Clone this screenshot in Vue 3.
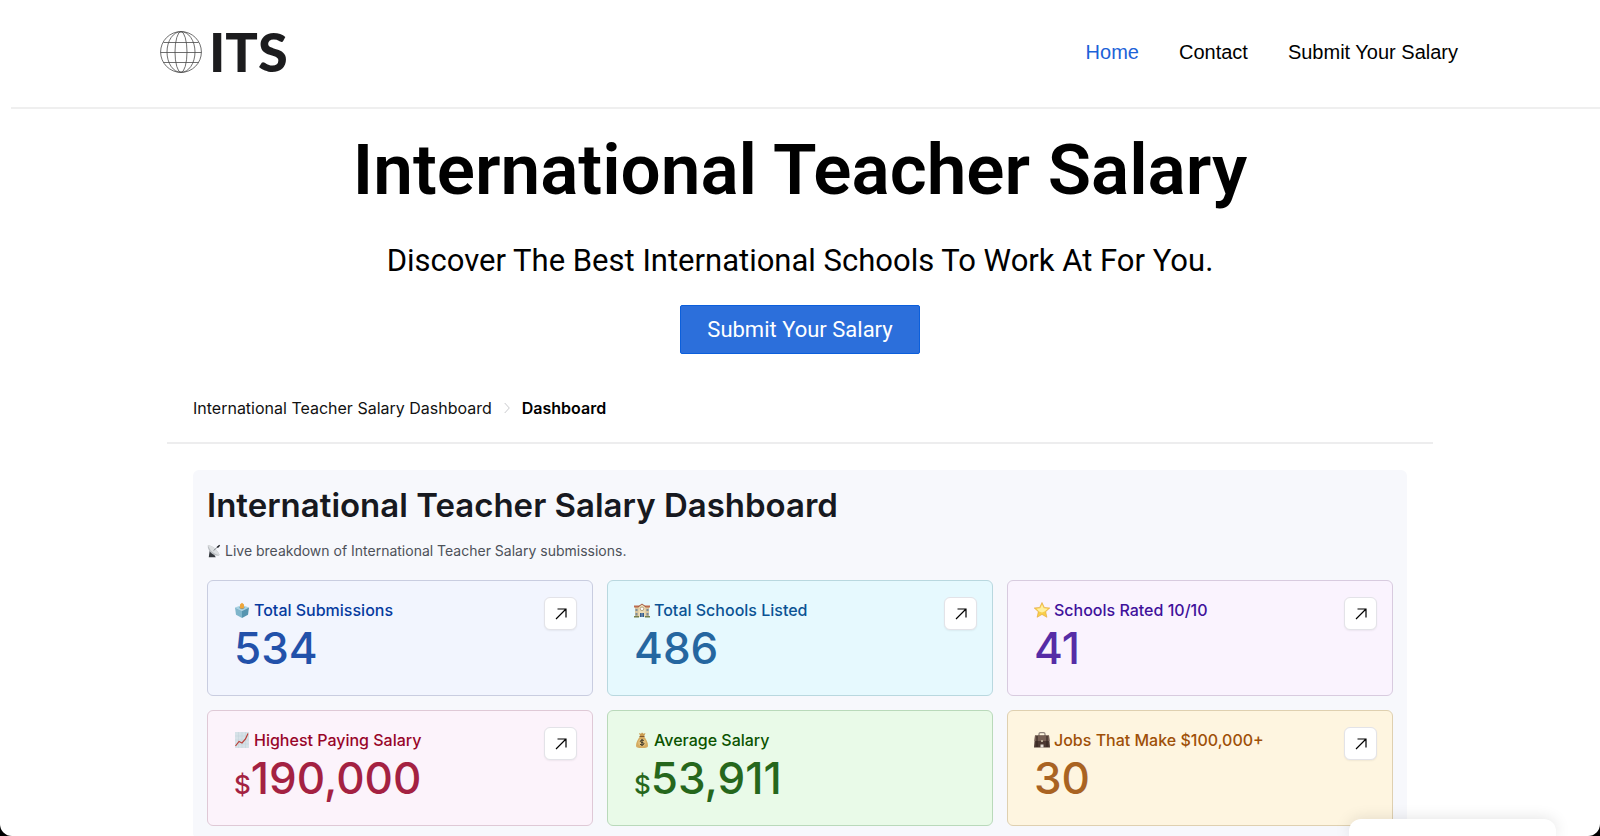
<script setup>
  const navLinks = [
    { label: 'Home', href: '#home', active: true },
    { label: 'Contact', href: '#contact' },
    { label: 'Submit Your Salary', href: '#submit' },
  ]

  const stats = [
    { id: 'submissions', icon: 'ballot', label: 'Total Submissions', value: '534', link: true },
    { id: 'schools', icon: 'school', label: 'Total Schools Listed', value: '486', link: true },
    { id: 'rated', icon: 'star', label: 'Schools Rated 10/10', value: '41', link: true },
    { id: 'highest', icon: 'chart', label: 'Highest Paying Salary', prefix: '$', value: '190,000', link: true },
    { id: 'average', icon: 'money', label: 'Average Salary', prefix: '$', value: '53,911' },
    { id: 'jobs', icon: 'briefcase', label: 'Jobs That Make $100,000+', value: '30', link: true },
  ]
</script>

<template>
  <div class="page">
    <header class="site-header">
      <a class="logo" href="#home">
        <svg class="logo-globe" viewBox="0 0 42 42" aria-hidden="true">
          <circle cx="21" cy="21" r="20.4" />
          <ellipse cx="21" cy="21" rx="14" ry="20.4" />
          <ellipse cx="21" cy="21" rx="6" ry="20.4" />
          <path d="M0.6 21.5H41.4M3.5 11.5H38.5M3.5 31.5H38.5" />
        </svg>
        <span class="logo-text">ITS</span>
      </a>
      <nav class="nav">
        <a
          v-for="item in navLinks"
          :key="item.label"
          :href="item.href"
          :class="['nav-link', { active: item.active }]"
          >{{ item.label }}</a
        >
      </nav>
    </header>

    <section class="hero">
      <h1 class="hero-title">International Teacher Salary</h1>
      <p class="hero-text">Discover The Best International Schools To Work At For You.</p>
      <button type="button" class="hero-button">Submit Your Salary</button>
    </section>

    <main class="content">
      <nav class="breadcrumb" aria-label="Breadcrumb">
        <a class="breadcrumb-link" href="#dashboards">International Teacher Salary Dashboard</a>
        <svg class="breadcrumb-arrow" viewBox="0 0 6 12" aria-hidden="true">
          <path d="M0.7 1L5.3 6L0.7 11" />
        </svg>
        <span class="breadcrumb-current">Dashboard</span>
      </nav>

      <section class="dashboard">
        <h2 class="dashboard-title">International Teacher Salary Dashboard</h2>
        <p class="dashboard-text">
          <svg class="dish" viewBox="0 0 16 16" aria-hidden="true">
            <path d="M3 8L2 15H10L7 10Z" fill="#34383d" />
            <path d="M1 1C0 6 5 13 13 13.5L14.5 12.5C12 7 7 2 1 1Z" fill="#b9bdc1" />
            <path d="M1 1C3 7 8 12 14.5 12.5C12 7 7 2 1 1Z" fill="#dcdfe1" />
            <path d="M7.5 7.5L13 2.5" stroke="#777c82" stroke-width="1" />
            <path d="M11 3.5L14 0.8L15 2L12.5 4.5Z" fill="#202327" />
          </svg>
          Live breakdown of International Teacher Salary submissions.
        </p>

        <div class="stats">
          <article v-for="stat in stats" :key="stat.id" :class="['stat', `stat-${stat.id}`]">
            <div class="stat-body">
              <h3 class="stat-label">
                <svg class="stat-icon" viewBox="0 0 16 16" aria-hidden="true">
                  <g v-if="stat.icon === 'ballot'">
                    <path d="M1 5.5L8 3L15 5.5L8 9Z" fill="#a9d2e2" />
                    <path d="M1 5.5L8 9V16L2 12.8Z" fill="#7fb5cb" />
                    <path d="M15 5.5L8 9V16L14 12.8Z" fill="#5795b0" />
                    <path d="M5 5.8L8 4.7L11 5.8L8 7.2Z" fill="#4c7f98" />
                    <path d="M6 6.2V2.5L8 0.8L10 2.5V6L8 6.8Z" fill="#eda63d" />
                  </g>
                  <g v-else-if="stat.icon === 'school'">
                    <path d="M1 5H15V15H1Z" fill="#d8c49c" />
                    <path d="M0 3.5H16V5.5H0Z" fill="#bd6c4e" />
                    <path d="M4.5 5L8 2.5L11.5 5V15H4.5Z" fill="#ecdcb5" />
                    <path d="M4 5L8 2L12 5" stroke="#a85d42" fill="none" />
                    <circle cx="8" cy="6.8" r="1.8" fill="#fff" stroke="#9b8760" stroke-width="0.7" />
                    <path d="M1.5 7H3.5V9H1.5ZM12.5 7H14.5V9H12.5ZM1.5 11H3.5V13.5H1.5ZM12.5 11H14.5V13.5H12.5Z" fill="#7c8c98" />
                    <path d="M6 11H10V15H6Z" fill="#355c8b" />
                    <path d="M8 11V15" stroke="#cad6df" stroke-width="0.6" />
                    <path d="M0 14H5V15.5H0ZM11 14H16V15.5H11Z" fill="#75804d" />
                  </g>
                  <g v-else-if="stat.icon === 'star'">
                    <path
                      d="M8 0.5L10.3 5.4L15.8 6L11.7 9.7L12.9 15.3L8 12.4L3.1 15.3L4.3 9.7L0.2 6L5.7 5.4Z"
                      fill="#f8ce4b"
                      stroke="#e2a63b"
                      stroke-width="0.6"
                    />
                    <path d="M8 2.5L9.7 6.2L13.8 6.8L10.5 9.4L8 10.5L5.2 9.4L2.5 6.8L6.3 6.2Z" fill="#fff0a0" />
                  </g>
                  <g v-else-if="stat.icon === 'chart'">
                    <path d="M1 0H15V16H1Z" fill="#d6e1e7" />
                    <path d="M4.5 0V16M8 0V16M11.5 0V16M1 4H15M1 8H15M1 12H15" stroke="#c3d0d8" stroke-width="0.5" />
                    <path d="M1.5 14L5 9.5L8 11L11.5 7L14 1.5" fill="none" stroke="#ba3e37" stroke-width="1.2" />
                  </g>
                  <g v-else-if="stat.icon === 'money'">
                    <path d="M5 1L7 1.8L8 0.5L9.5 1.7L11.5 1L10 4.5H6.3Z" fill="#c99b4f" />
                    <path d="M6 4.5H10C12 7 14 10 14 13.5C14 15.5 12.5 16 8 16C3.5 16 2 15.5 2 13.5C2 10 4 7 6 4.5Z" fill="#d5ab60" />
                    <path d="M5.5 4.5H10.5" stroke="#80572d" />
                    <circle cx="8" cy="10.5" r="3.8" fill="#e2bf7b" />
                    <path
                      d="M10 8.7C9.5 7.9 6.3 7.7 6.3 9.3C6.3 10.9 10 10 10 11.8C10 13.3 6.7 13.2 6 12.2M8 6.9V14"
                      fill="none"
                      stroke="#3b3427"
                      stroke-width="1"
                    />
                  </g>
                  <g v-else>
                    <path d="M5 4V2C5 0.9 5.6 0.7 6.5 0.7H9.5C10.4 0.7 11 0.9 11 2V4" fill="none" stroke="#8d8179" stroke-width="1.2" />
                    <path d="M1 3.5H15L16 15.5H0Z" fill="#4b3831" />
                    <path d="M1 3.5H15L15.5 9H0.5Z" fill="#755e53" />
                    <path d="M3 4V15M13 4V15" stroke="#32231e" stroke-width="1" />
                    <path d="M6.5 12.5H9.5V15.5H6.5Z" fill="#e4ddd5" />
                    <path d="M7 8H9V10H7Z" fill="#b6a994" />
                  </g>
                </svg>
                {{ stat.label }}
              </h3>
              <p class="stat-value"><span v-if="stat.prefix" class="stat-prefix">{{ stat.prefix }}</span>{{ stat.value }}</p>
            </div>
            <button v-if="stat.link" type="button" class="stat-open" :aria-label="`Open ${stat.label}`">
              <svg viewBox="0 0 12 12" aria-hidden="true">
                <path d="M1 11L11 1M2.5 1H11V9.5" />
              </svg>
            </button>
          </article>
        </div>
      </section>
    </main>

    <aside class="floating-card"></aside>
  </div>
</template>

<style>
  body {
    margin: 0;
    background: #000000;
  }
</style>

<style scoped>
  .page {
    position: relative;
    box-sizing: border-box;
    height: 100vh;
    overflow: hidden;
    border-radius: 0 0 12px 12px;
    background: #ffffff;
    color: #000000;
    font-family: Inter, 'Liberation Sans', sans-serif;
  }

  .site-header {
    display: flex;
    align-items: center;
    justify-content: space-between;
    margin-left: 11px;
    padding: 20px 142px 23px 149px;
    border-bottom: 2px solid #efefef;
  }

  .logo {
    display: flex;
    align-items: center;
    gap: 7px;
    color: #1c1c1e;
    text-decoration: none;
  }

  .logo-globe {
    width: 42px;
    height: 42px;
    fill: none;
    stroke: #4a4a4a;
    stroke-width: 0.8;
  }

  .logo-text {
    font-family: Lato, sans-serif;
    font-size: 54px;
    font-weight: 900;
    line-height: 64px;
  }

  .nav {
    display: flex;
    gap: 40px;
    font-family: 'Liberation Sans', Arial, sans-serif;
    font-size: 20px;
    line-height: 24px;
  }

  .nav-link {
    color: #000000;
    text-decoration: none;
  }

  .nav-link.active {
    color: #1c62d8;
  }

  .hero {
    display: flex;
    flex-direction: column;
    align-items: center;
    padding-top: 19px;
    font-family: Roboto, sans-serif;
    text-align: center;
  }

  .hero-title {
    margin: 0;
    font-size: 71px;
    font-weight: 600;
    line-height: 84px;
  }

  .hero-text {
    margin: 29px 0 24px;
    font-size: 31px;
    line-height: 40px;
  }

  .hero-button {
    height: 49px;
    padding: 0 26px;
    border: 1px solid #0b5fdc;
    border-radius: 2px;
    background: #2c6fdb;
    color: #ffffff;
    font-family: inherit;
    font-size: 22px;
    cursor: pointer;
  }

  .content {
    margin: 26px 167px 0;
  }

  .breadcrumb {
    display: flex;
    align-items: center;
    gap: 12px;
    padding: 16px 26px 22px;
    border-bottom: 2px solid #ededee;
    font-size: 16px;
    line-height: 24px;
  }

  .breadcrumb-link {
    color: #111111;
    text-decoration: none;
  }

  .breadcrumb-arrow {
    width: 6px;
    height: 12px;
    fill: none;
    stroke: #c9cacd;
  }

  .breadcrumb-current {
    font-weight: 600;
  }

  .dashboard {
    margin: 26px 26px 0;
    padding: 13px 14px;
    border-radius: 6px;
    background: #f7f8fc;
  }

  .dashboard-title {
    margin: 0;
    color: #171920;
    font-size: 33px;
    font-weight: 600;
    line-height: 44px;
  }

  .dashboard-text {
    display: flex;
    align-items: center;
    gap: 4px;
    margin: 12px 0 17px;
    color: #4d5159;
    font-size: 14px;
    line-height: 24px;
  }

  .dish {
    width: 14px;
    height: 14px;
  }

  .stats {
    display: grid;
    grid-template-columns: repeat(3, 1fr);
    gap: 14px;
  }

  .stat {
    display: flex;
    align-items: flex-start;
    justify-content: space-between;
    box-sizing: border-box;
    min-height: 116px;
    padding: 16px 15px 20px 26px;
    border: 1px solid;
    border-radius: 6px;
  }

  .stat-label {
    display: flex;
    align-items: center;
    gap: 4px;
    margin: 1px 0 0;
    font-size: 16px;
    font-weight: 500;
    line-height: 24px;
  }

  .stat-icon {
    width: 16px;
    height: 16px;
  }

  .stat-value {
    margin: 0;
    font-size: 44px;
    font-weight: 500;
    line-height: 52px;
    opacity: 0.88;
  }

  .stat-prefix {
    font-size: 26px;
    line-height: 1;
  }

  .stat-open {
    display: flex;
    align-items: center;
    justify-content: center;
    width: 33px;
    height: 33px;
    padding: 0;
    border: 1px solid #e3e3e8;
    border-radius: 6px;
    background: #ffffff;
    box-shadow: 0 1px 2px rgba(0, 0, 0, 0.06);
    cursor: pointer;
  }

  .stat-open svg {
    width: 12px;
    height: 12px;
    fill: none;
    stroke: #000000;
    stroke-width: 1.2;
  }

  .stat-submissions {
    border-color: #c9cde0;
    background: #f2f5fe;
    color: #063b9f;
  }

  .stat-schools {
    border-color: #b9d8df;
    background: #e6f9fe;
    color: #0b5394;
  }

  .stat-rated {
    border-color: #d8cbdf;
    background: #faf3fe;
    color: #40119b;
  }

  .stat-highest {
    border-color: #dfc9d6;
    background: #fcf3fb;
    color: #980529;
  }

  .stat-average {
    border-color: #b9d9ba;
    background: #e9fae8;
    color: #0b5300;
  }

  .stat-jobs {
    border-color: #dfd0b0;
    background: #fef5e0;
    color: #9e5008;
  }

  .floating-card {
    position: absolute;
    right: 44px;
    bottom: 0;
    width: 207px;
    height: 17px;
    border-radius: 12px 12px 0 0;
    background: #ffffff;
    box-shadow: 0 0 16px rgba(0, 0, 0, 0.12);
  }
</style>
